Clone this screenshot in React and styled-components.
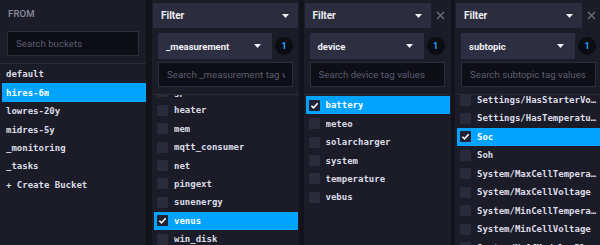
import React from "react";
import styled, { createGlobalStyle } from "styled-components";

const GlobalStyle = createGlobalStyle`
  html, body {
    margin: 0;
    padding: 0;
    background: #13131c;
    overflow: hidden;
  }
  body {
    font-family: Roboto, "Liberation Sans", sans-serif;
  }
`;

const buckets = ["default", "hires-6m", "lowres-20y", "midres-5y", "_monitoring", "_tasks", "+ Create Bucket"];

const filters = [
  {
    key: "_measurement",
    closable: false,
    offset: -13.45,
    values: ["gps", "heater", "mem", "mqtt_consumer", "net", "pingext", "sunenergy", "venus", "win_disk", "win_mem"],
    selected: "venus",
  },
  {
    key: "device",
    closable: true,
    offset: 0,
    values: ["battery", "meteo", "solarcharger", "system", "temperature", "vebus"],
    selected: "battery",
  },
  {
    key: "subtopic",
    closable: true,
    offset: -5.2,
    values: [
      "Settings/HasStarterVoltage",
      "Settings/HasTemperature",
      "Soc",
      "Soh",
      "System/MaxCellTemperature",
      "System/MaxCellVoltage",
      "System/MinCellTemperature",
      "System/MinCellVoltage",
      "System/NrOfModulesBlockingCharge",
    ],
    selected: "Soc",
  },
];

function Caret() {
  return (
    <svg width="7" height="4" viewBox="0 0 7 4">
      <polygon points="0,0 7,0 3.5,4" fill="#f0f0f5" />
    </svg>
  );
}

function Check() {
  return (
    <svg width="11" height="11" viewBox="0 0 11 11">
      <path d="M2.4 5.7 L4.5 7.8 L8.7 3.3" stroke="#ffffff" strokeWidth="1.6" fill="none" />
    </svg>
  );
}

function Close() {
  return (
    <svg width="9" height="9" viewBox="0 0 9 9">
      <path d="M1 1 L8 8 M8 1 L1 8" stroke="#6d6d82" strokeWidth="1.4" />
    </svg>
  );
}

function FilterPanel({ filter }) {
  return (
    <Panel>
      <HeaderRow>
        <HeaderBar>
          <span>Filter</span>
          <Caret />
        </HeaderBar>
        {filter.closable && (
          <CloseBtn>
            <Close />
          </CloseBtn>
        )}
      </HeaderRow>
      <DropRow>
        <Dropdown>
          <span>{filter.key}</span>
          <Caret />
        </Dropdown>
        <Badge>1</Badge>
      </DropRow>
      <Search $mx={6}>
        <Placeholder>Search {filter.key} tag values</Placeholder>
      </Search>
      <Divider />
      <ListWindow>
        <List style={{ marginTop: filter.offset }}>
          {filter.values.map((v) => {
            const on = v === filter.selected;
            return (
              <Row key={v} $active={on}>
                <Box $active={on}>{on && <Check />}</Box>
                <ItemText $bold={on}>{v}</ItemText>
              </Row>
            );
          })}
        </List>
      </ListWindow>
    </Panel>
  );
}

export default function App() {
  return (
    <>
      <GlobalStyle />
      <Builder>
        <FromPanel>
          <Label>FROM</Label>
          <Search $mx={7}>
            <Placeholder>Search buckets</Placeholder>
          </Search>
          <Divider />
          <List>
            {buckets.map((b) => (
              <BucketRow key={b} $active={b === "hires-6m"}>
                <ItemText $bold={b === "hires-6m"}>{b}</ItemText>
              </BucketRow>
            ))}
          </List>
        </FromPanel>
        {filters.map((f) => (
          <FilterPanel key={f.key} filter={f} />
        ))}
      </Builder>
    </>
  );
}

const Builder = styled.div`
  display: flex;
  gap: 4.5px;
  width: 600px;
  height: 245px;
  overflow: hidden;
`;

const Panel = styled.div`
  flex: 0 0 147px;
  background: #1c1c29;
  display: flex;
  flex-direction: column;
  min-width: 0;
  overflow: hidden;
`;

const FromPanel = styled(Panel)`
  flex: 0 0 146px;
  margin-right: 1.5px;
`;

const Label = styled.div`
  padding: 8px 8px 0;
  height: 11px;
  line-height: 11px;
  font-size: 9.5px;
  font-weight: 500;
  letter-spacing: 0.2px;
  color: #8b8b9e;
  margin-bottom: 12px;
`;

const Search = styled.div`
  margin: 0 ${(p) => p.$mx}px;
  height: 25px;
  box-sizing: border-box;
  border: 1px solid #2c2c3d;
  background: #0e0e16;
  padding: 0 7px 0 8px;
  display: flex;
  align-items: center;
`;

const Placeholder = styled.span`
  color: #5d5d72;
  font-size: 9.7px;
  white-space: nowrap;
  overflow: hidden;
  min-width: 0;
`;

const Divider = styled.div`
  margin-top: 7px;
  height: 1px;
  background: #2a2a3a;
  flex-shrink: 0;
`;

const List = styled.div`
  display: flex;
  flex-direction: column;
  padding-top: 1px;
`;

const ListWindow = styled.div`
  flex: 1;
  overflow: hidden;
`;

const BucketRow = styled.div`
  height: 18.45px;
  margin: 0 0 0 2px;
  padding-left: 4px;
  display: flex;
  align-items: center;
  background: ${(p) => (p.$active ? "#00a3ff" : "transparent")};
`;

const Row = styled.div`
  height: 18.45px;
  flex-shrink: 0;
  margin: 0 1px 0 2px;
  padding: 0 4px 0 3px;
  display: flex;
  align-items: center;
  min-width: 0;
  background: ${(p) => (p.$active ? "#00a3ff" : "transparent")};
`;

const Box = styled.div`
  width: 11px;
  height: 11px;
  flex-shrink: 0;
  border-radius: 1px;
  background: ${(p) => (p.$active ? "#1f2033" : "#2a2a3b")};
  margin-right: 6px;
  display: flex;
`;

const ItemText = styled.span`
  font-family: "DejaVu Sans Mono", "Liberation Mono", monospace;
  font-size: 9px;
  font-weight: ${(p) => (p.$bold ? 700 : 600)};
  color: ${(p) => (p.$bold ? "#ffffff" : "#dcdce6")};
  white-space: nowrap;
  overflow: hidden;
  text-overflow: ellipsis;
  min-width: 0;
`;

const HeaderRow = styled.div`
  display: flex;
  height: 25px;
  margin: 3px 1px 0;
  flex-shrink: 0;
`;

const HeaderBar = styled.div`
  flex: 1;
  background: #2b2c3e;
  display: flex;
  align-items: center;
  justify-content: space-between;
  padding: 0 9px 0 8px;
  font-size: 10px;
  font-weight: 700;
  color: #f0f0f5;
`;

const CloseBtn = styled.div`
  width: 19px;
  display: flex;
  align-items: center;
  justify-content: center;
`;

const DropRow = styled.div`
  display: flex;
  align-items: center;
  margin: 5px 6px 3px;
  flex-shrink: 0;
`;

const Dropdown = styled.div`
  width: 114px;
  height: 26px;
  box-sizing: border-box;
  background: #2d2e42;
  display: flex;
  align-items: center;
  justify-content: space-between;
  padding: 0 11px 0 8px;
  font-size: 9.5px;
  font-weight: 700;
  color: #f0f0f5;
`;

const Badge = styled.div`
  width: 18px;
  height: 18px;
  border-radius: 50%;
  margin-left: 3px;
  background: #0c0c13;
  color: #1aa7ff;
  font-size: 9px;
  font-weight: 700;
  display: flex;
  align-items: center;
  justify-content: center;
`;
